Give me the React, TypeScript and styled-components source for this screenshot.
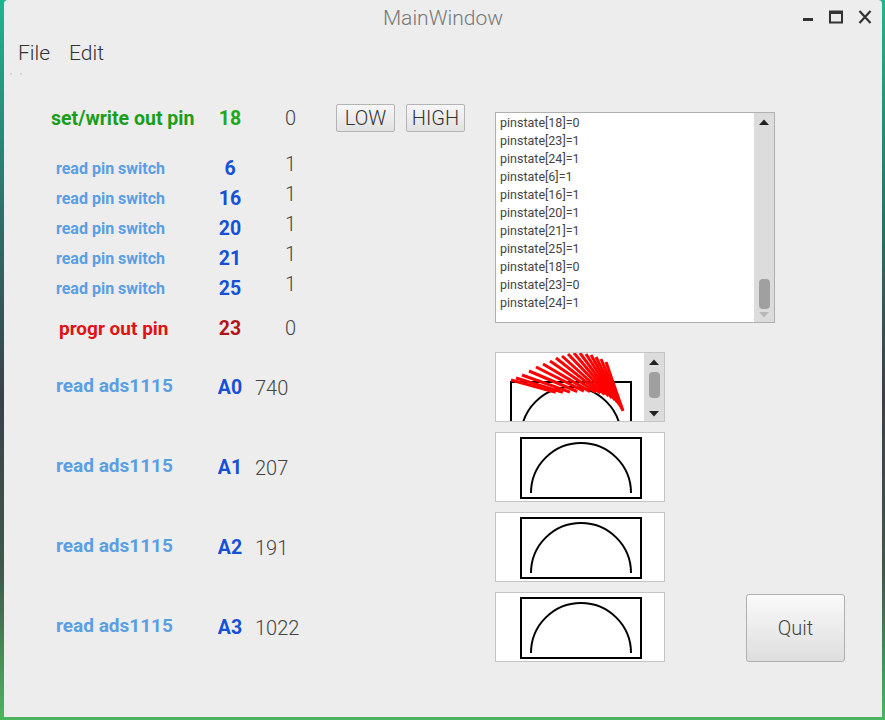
import React from "react";
import styled, { createGlobalStyle } from "styled-components";

const Global = createGlobalStyle`
  html, body { margin: 0; padding: 0; }
  body {
    width: 885px; height: 720px; overflow: hidden;
    background: linear-gradient(180deg, #1fb58f 0%, #2b7a70 25%, #3a4048 55%, #3f5a4c 80%, #4cb560 100%);
    font-family: Roboto, "Noto Sans", sans-serif;
  }
`;

const Desktop = styled.div`
  width: 885px; height: 720px;
  display: flex;
  padding: 0 3px 3px 4px;
  box-sizing: border-box;
`;

const Window = styled.div`
  flex: 1;
  background: #ededed;
  border-radius: 4px 4px 0 0;
  display: flex;
  flex-direction: column;
  overflow: hidden;
`;

const TitleBar = styled.div`
  height: 36px;
  display: flex;
  align-items: center;
  justify-content: center;
  position: relative;
  font-size: 21px;
  font-weight: 300;
  color: #777;
`;

const Controls = styled.div`
  position: absolute;
  right: 10px;
  top: 9px;
  display: flex;
  gap: 15px;
  align-items: center;
`;

const MenuBar = styled.div`
  height: 34px;
  display: flex;
  align-items: center;
  gap: 19px;
  padding-left: 14px;
  font-size: 21px;
  font-weight: 300;
  color: #333;
`;

const Dots = styled.div`
  height: 33px;
  display: flex;
  gap: 8px;
  padding: 3px 0 0 6px;
  box-sizing: border-box;
  & > span { width: 2px; height: 2px; background: #c8c8c8; border-radius: 1px; }
`;

const TopGrid = styled.div`
  display: grid;
  grid-template-columns: 206px 40px 86px 159px 280px;
  grid-template-rows: 30px 20px 30px 30px 30px 30px 30px 10px 30px;
  align-items: center;
`;

const Label = styled.div<{ $pad: number; $color: string; $size: number; $lift?: number }>`
  padding-left: ${(p) => p.$pad}px;
  margin-top: ${(p) => -(p.$lift || 0)}px;
  color: ${(p) => p.$color};
  font-size: ${(p) => p.$size}px;
  font-weight: 700;
  white-space: nowrap;
`;

const Num = styled.div<{ $color: string }>`
  color: ${(p) => p.$color};
  font-size: 19.5px;
  font-weight: 700;
  text-align: center;
`;

const Value = styled.div<{ $pad: number; $lift?: number }>`
  padding-left: ${(p) => p.$pad}px;
  margin-top: ${(p) => -(p.$lift || 0)}px;
  color: #444;
  font-size: 20px;
  font-weight: 300;
`;

const Buttons = styled.div`
  display: flex;
  gap: 11px;
`;

const SmallButton = styled.button`
  width: 59px;
  height: 28px;
  padding: 0;
  border: 1px solid #b4b4b4;
  border-radius: 2px;
  background: linear-gradient(180deg, #f7f7f7, #e2e2e2);
  font-family: Roboto, sans-serif;
  font-size: 20px;
  font-weight: 300;
  color: #333;
  line-height: 26px;
`;

const ListBox = styled.div`
  grid-column: 5;
  grid-row: 1 / span 9;
  align-self: start;
  margin-top: 9px;
  width: 280px;
  height: 211px;
  box-sizing: border-box;
  border: 1px solid #b0b0b0;
  background: #fff;
  display: flex;
`;

const ListItems = styled.div`
  flex: 1;
  padding: 1px 0 0 4px;
  font-size: 12.5px;
  line-height: 18px;
  color: #444;
`;

const VScroll = styled.div`
  width: 20px;
  background: #dcdcdc;
  display: flex;
  flex-direction: column;
  align-items: center;
  justify-content: space-between;
  padding: 5px 0 3px;
  box-sizing: border-box;
`;

const Thumb = styled.div<{ $h: number }>`
  width: 11px;
  height: ${(p) => p.$h}px;
  border-radius: 4px;
  background: #a0a0a0;
`;

const ScrollMid = styled.div<{ $end?: boolean }>`
  flex: 1;
  display: flex;
  flex-direction: column;
  justify-content: ${(p) => (p.$end ? "flex-end" : "flex-start")};
  padding: 6px 0 2px;
`;

const Spacer = styled.div`
  grid-column: 1 / span 4;
`;

const BottomGrid = styled.div`
  margin-top: 9px;
  display: grid;
  grid-template-columns: 206px 40px 245px 170px 1fr;
  grid-auto-rows: 70px;
  row-gap: 10px;
  align-items: center;
`;

const AdcValue = styled.div`
  padding-left: 5px;
  margin-top: 2px;
  color: #444;
  font-size: 20px;
  font-weight: 300;
`;

const Canvas = styled.div`
  width: 170px;
  height: 70px;
  box-sizing: border-box;
  border: 1px solid #c4c4c4;
  background: #fff;
  display: flex;
  overflow: hidden;
`;

const CanvasArea = styled.div`
  flex: 1;
  overflow: hidden;
`;

const QuitCell = styled.div`
  padding-left: 81px;
  padding-top: 1px;
`;

const QuitButton = styled.button`
  width: 99px;
  height: 68px;
  border: 1px solid #b0b0b0;
  border-radius: 3px;
  background: linear-gradient(180deg, #fafafa, #dedede);
  font-family: Roboto, sans-serif;
  font-size: 20px;
  font-weight: 300;
  color: #444;
`;

const UpArrow = ({ c = "#222" }: { c?: string }) => (
  <svg width="12" height="8" viewBox="0 0 12 8"><path d="M1 7 L6 1.5 L11 7 Z" fill={c} /></svg>
);
const DownArrow = ({ c = "#222" }: { c?: string }) => (
  <svg width="12" height="8" viewBox="0 0 12 8"><path d="M1 1 L6 6.5 L11 1 Z" fill={c} /></svg>
);

const Gauge = ({ dx = 0, dy = 0, red = false }: { dx?: number; dy?: number; red?: boolean }) => {
  const c = { x: 127, y: 58 };
  const ends = [
    [15, 27], [20, 25], [26, 22], [33, 18], [40, 14], [47, 11], [54, 8], [60, 5],
    [66, 3], [72, 1], [78, 0], [84, 0], [90, 1], [95, 2], [100, 4], [105, 6], [110, 9],
  ];
  return (
    <svg width="170" height="70" viewBox="0 0 170 70">
      <g transform={`translate(${dx},${dy})`}>
        <rect x="25" y="5" width="120" height="60" fill="none" stroke="#000" strokeWidth="2" />
        <path d="M35 60 A50 50 0 0 1 135 60" fill="none" stroke="#000" strokeWidth="2" />
      </g>
      {red &&
        ends.map(([x, y], i) => {
          const t = 0.4 + (0.6 * i) / (ends.length - 1);
          return (
            <line key={i} x1={x} y1={y} x2={x + (c.x - x) * t} y2={y + (c.y - y) * t}
              stroke="#f00" strokeWidth="3" />
          );
        })}
    </svg>
  );
};

const pins = ["6", "16", "20", "21", "25"];
const log = [
  "pinstate[18]=0", "pinstate[23]=1", "pinstate[24]=1", "pinstate[6]=1", "pinstate[16]=1",
  "pinstate[20]=1", "pinstate[21]=1", "pinstate[25]=1", "pinstate[18]=0", "pinstate[23]=0", "pinstate[24]=1",
];
const adc = [["A0", "740"], ["A1", "207"], ["A2", "191"], ["A3", "1022"]];

export default function App() {
  return (
    <>
      <Global />
      <Desktop>
        <Window>
          <TitleBar>
            MainWindow
            <Controls>
              <svg width="12" height="16" viewBox="0 0 12 16"><rect x="1" y="9" width="10" height="3" fill="#333" /></svg>
              <svg width="14" height="16" viewBox="0 0 14 16"><rect x="1" y="2.5" width="12" height="11" fill="none" stroke="#333" strokeWidth="2" /><rect x="1" y="2" width="12" height="3" fill="#333" /></svg>
              <svg width="14" height="16" viewBox="0 0 14 16"><path d="M1.5 2 L12.5 14 M12.5 2 L1.5 14" stroke="#333" strokeWidth="2.2" /></svg>
            </Controls>
          </TitleBar>
          <MenuBar>
            <span>File</span>
            <span>Edit</span>
          </MenuBar>
          <Dots><span /><span /></Dots>
          <TopGrid>
            <Label $pad={47} $color="#1a9e1a" $size={19.5}>set/write out pin</Label>
            <Num $color="#1ea81e">18</Num>
            <Value $pad={35}>0</Value>
            <Buttons>
              <SmallButton>LOW</SmallButton>
              <SmallButton>HIGH</SmallButton>
            </Buttons>
            <ListBox>
              <ListItems>{log.map((l, i) => <div key={i}>{l}</div>)}</ListItems>
              <VScroll>
                <UpArrow />
                <ScrollMid $end><Thumb $h={30} /></ScrollMid>
                <DownArrow c="#b8b8b8" />
              </VScroll>
            </ListBox>
            <Spacer />
            {pins.map((p) => (
              <React.Fragment key={p}>
                <Label $pad={52} $color="#5a9fe4" $size={16}>read pin switch</Label>
                <Num $color="#1450d8">{p}</Num>
                <Value $pad={35} $lift={8}>1</Value>
                <div />
              </React.Fragment>
            ))}
            <Spacer />
            <Label $pad={55} $color="#e01212" $size={19}>progr out pin</Label>
            <Num $color="#b01616">23</Num>
            <Value $pad={35}>0</Value>
            <div />
          </TopGrid>
          <BottomGrid>
            {adc.map(([ch, v], i) => (
              <React.Fragment key={ch}>
                <Label $pad={52} $color="#5a9fe4" $size={19} $lift={4}>read ads1115</Label>
                <Num $color="#1450d8">{ch}</Num>
                <AdcValue>{v}</AdcValue>
                <Canvas>
                  {i === 0 ? (
                    <>
                      <CanvasArea><Gauge dx={-10} dy={24} red /></CanvasArea>
                      <VScroll>
                        <UpArrow />
                        <ScrollMid><Thumb $h={26} /></ScrollMid>
                        <DownArrow />
                      </VScroll>
                    </>
                  ) : (
                    <CanvasArea><Gauge /></CanvasArea>
                  )}
                </Canvas>
                <QuitCell>{i === 3 && <QuitButton>Quit</QuitButton>}</QuitCell>
              </React.Fragment>
            ))}
          </BottomGrid>
        </Window>
      </Desktop>
    </>
  );
}
